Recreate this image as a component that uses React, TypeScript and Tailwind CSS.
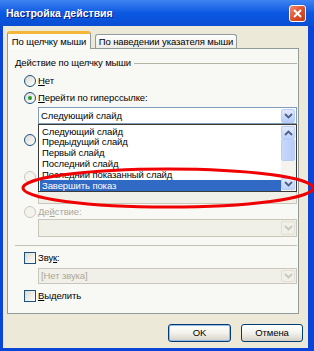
import React from "react";

const F = "font-['Liberation_Sans',Arial,sans-serif]";

function Radio({ checked = false, disabled = false }: { checked?: boolean; disabled?: boolean }) {
  return (
    <div
      className={`w-[12px] h-[12px] rounded-full border flex items-center justify-center shrink-0 ${
        disabled ? "border-[#CAC8BB] bg-[#F4F3EE]" : "border-[#1C5180] bg-gradient-to-br from-[#DCD9CF] to-white"
      }`}
    >
      {checked && <div className="w-[4px] h-[4px] rounded-full bg-[#21A121]" />}
    </div>
  );
}

function Check() {
  return <div className="w-[12px] h-[12px] border border-[#1C5180] bg-gradient-to-br from-[#DCD9CF] to-white shrink-0" />;
}

function Chevron({ color, up = false }: { color: string; up?: boolean }) {
  return (
    <svg width="9" height="6" viewBox="0 0 9 6" className={up ? "rotate-180" : ""}>
      <path d="M1 1 L4.5 4.5 L8 1" fill="none" stroke={color} strokeWidth="1.8" />
    </svg>
  );
}

function DropBtn({ disabled = false, h = "h-[14px]" }: { disabled?: boolean; h?: string }) {
  return (
    <div
      className={`w-[14px] ${h} rounded-[2px] border flex items-center justify-center shrink-0 ${
        disabled ? "border-[#E2E0D5] bg-[#F0EFE8]" : "border-[#B9CDF5] bg-gradient-to-b from-[#E1EAFE] to-[#B5CBF9]"
      }`}
    >
      <Chevron color={disabled ? "#C9C7BA" : "#4D6185"} />
    </div>
  );
}

export default function App() {
  return (
    <div className={`${F} w-[314px] h-[351px] bg-[#0A45D8] flex flex-col relative overflow-hidden`}>
      {/* title bar */}
      <div className="h-[26px] flex items-center pl-[6px] pr-[8px] bg-gradient-to-b from-[#3D83F0] via-[#0B58E2] to-[#0A4ED2]">
        <span className="text-white font-bold text-[10.5px] leading-none [text-shadow:1px_1px_0_#0A1E8C]">
          Настройка действия
        </span>
        <div className="ml-auto w-[17px] h-[17px] rounded-[3px] border border-white bg-gradient-to-br from-[#F08A6A] via-[#E0502A] to-[#C23A14] flex items-center justify-center">
          <svg width="9" height="9" viewBox="0 0 9 9">
            <path d="M1 1 L8 8 M8 1 L1 8" stroke="white" strokeWidth="2" />
          </svg>
        </div>
      </div>

      {/* body */}
      <div className="flex-1 ml-[3px] mr-[6px] mb-[3px] bg-[#ECE9D8] flex flex-col text-[9.5px] tracking-[-0.1px] text-black whitespace-nowrap">
        {/* tabs */}
        <div className="flex items-end pt-[5px] pl-[4px] relative z-10">
          <div className="w-[84px] h-[18px] bg-[#FBFBF9] border-x border-[#919B9C] border-t-[3px] border-t-[#F5B73A] rounded-t-[3px] flex items-center justify-center -mb-px">
            <span className="leading-none">По щелчку мыши</span>
          </div>
          <div className="ml-[4px] w-[142px] h-[14px] border border-b-0 border-[#919B9C] rounded-t-[3px] bg-gradient-to-b from-white to-[#ECEBE6] flex items-center justify-center">
            <span className="leading-none">По наведении указателя мыши</span>
          </div>
        </div>

        {/* panel */}
        <div className="ml-[4px] w-[292px] h-[266px] border border-[#919B9C] bg-[#F8F8F5] flex flex-col pl-[7px] pr-[1px] relative">
          {/* group label */}
          <div className="mt-[8px] h-[12px] flex items-center">
            <span className="leading-none">Действие по щелчку мыши</span>
            <div className="flex-1 ml-[3px] h-px bg-[#B5B3A6]" />
          </div>
          <div className="mt-[6px] h-[12px] flex items-center ml-[9px] gap-[2px]">
            <Radio />
            <span className="leading-none"><u>Н</u>ет</span>
          </div>
          <div className="mt-[5px] h-[12px] flex items-center ml-[9px] gap-[2px]">
            <Radio checked />
            <span className="leading-none"><u>П</u>ерейти по гиперссылке:</span>
          </div>
          {/* combo */}
          <div className="mt-[3px] ml-[23px] h-[17px] border border-[#7F9DB9] bg-white flex items-center pl-[2px] pr-px relative">
            <span className="flex-1 leading-none">Следующий слайд</span>
            <DropBtn />
            {/* dropdown list */}
            <div className="absolute left-[-1px] right-[-1px] top-[16px] h-[68px] border border-[#3A3A3A] bg-white flex z-20">
              <div className="flex-1 flex flex-col pt-px pl-px">
                {["Следующий слайд", "Предыдущий слайд", "Первый слайд", "Последний слайд", "Последний показанный слайд"].map(
                  (t) => (
                    <div key={t} className="h-[11px] flex items-center pl-[2px] leading-none">
                      {t}
                    </div>
                  )
                )}
                <div className="h-[11px] flex items-center pl-[2px] leading-none bg-[#316AC5] text-white">Завершить показ</div>
              </div>
              <div className="w-[15px] flex flex-col bg-[#F4F3EE] py-px pr-px">
                <div className="h-[13px] rounded-[2px] border border-[#B9CDF5] bg-gradient-to-b from-[#E1EAFE] to-[#C0D3FB] flex items-center justify-center">
                  <Chevron color="#4D6185" up />
                </div>
                <div className="h-[22px] rounded-[2px] border border-[#B9CDF5] bg-gradient-to-r from-[#C8D8FC] to-[#B8CCF8]" />
                <div className="flex-1" />
                <div className="h-[12px] rounded-[2px] border border-[#B9CDF5] bg-gradient-to-b from-[#E1EAFE] to-[#C0D3FB] flex items-center justify-center">
                  <Chevron color="#4D6185" />
                </div>
              </div>
            </div>
          </div>
          <div className="mt-[10px] h-[12px] flex items-center ml-[9px] gap-[2px]">
            <Radio />
            <span className="leading-none">З</span>
          </div>
          <div className="mt-[4px] ml-[23px] h-[16px] border border-[#C9C7BA] bg-[#F4F3EE]" />
          <div className="mt-[5px] h-[12px] flex items-center ml-[9px] gap-[2px] text-[#ACA899]">
            <Radio disabled />
          </div>
          <div className="mt-[5px] ml-[23px] h-[16px] border border-[#C9C7BA] bg-[#F0EFE8]" />
          <div className="mt-[2px] h-[12px] flex items-center ml-[9px] gap-[2px] text-[#ACA899]">
            <Radio disabled />
            <span className="leading-none">Де<u>й</u>ствие:</span>
          </div>
          <div className="mt-px ml-[23px] h-[18px] border border-[#C9C7BA] bg-[#F0EFE8] flex items-center justify-end pr-px">
            <DropBtn disabled />
          </div>
          <div className="mt-[8px] h-px bg-[#C5C2B2]" />
          <div className="mt-[6px] h-[12px] flex items-center ml-[9px] gap-[2px]">
            <Check />
            <span className="leading-none">Зву<u>к</u>:</span>
          </div>
          <div className="mt-[4px] ml-[23px] h-[16px] border border-[#C9C7BA] bg-[#F0EFE8] flex items-center pl-[2px] pr-px text-[#ACA899]">
            <span className="flex-1 leading-none">[Нет звука]</span>
            <DropBtn disabled h="h-[12px]" />
          </div>
          <div className="mt-[6px] h-[12px] flex items-center ml-[9px] gap-[2px]">
            <Check />
            <span className="leading-none"><u>В</u>ыделить</span>
          </div>
        </div>

        {/* buttons */}
        <div className="mt-[10px] flex justify-end pr-[5px] gap-[10px]">
          <button className="w-[63px] h-[18px] rounded-[3px] border border-[#003C74] bg-gradient-to-b from-white via-[#F3F2EC] to-[#D6D0C5] shadow-[inset_0_0_0_1px_#98B8EA] text-[9.5px] leading-none">
            OK
          </button>
          <button className="w-[62px] h-[18px] rounded-[3px] border border-[#003C74] bg-gradient-to-b from-white via-[#F3F2EC] to-[#D6D0C5] text-[9.5px] leading-none">
            Отмена
          </button>
        </div>
      </div>

      {/* red annotation ellipse */}
      <svg className="absolute left-0 top-0 pointer-events-none z-30" width="314" height="351" viewBox="0 0 314 351">
        <ellipse cx="168" cy="188" rx="145" ry="19" fill="none" stroke="#F00000" strokeWidth="3" />
      </svg>
    </div>
  );
}
